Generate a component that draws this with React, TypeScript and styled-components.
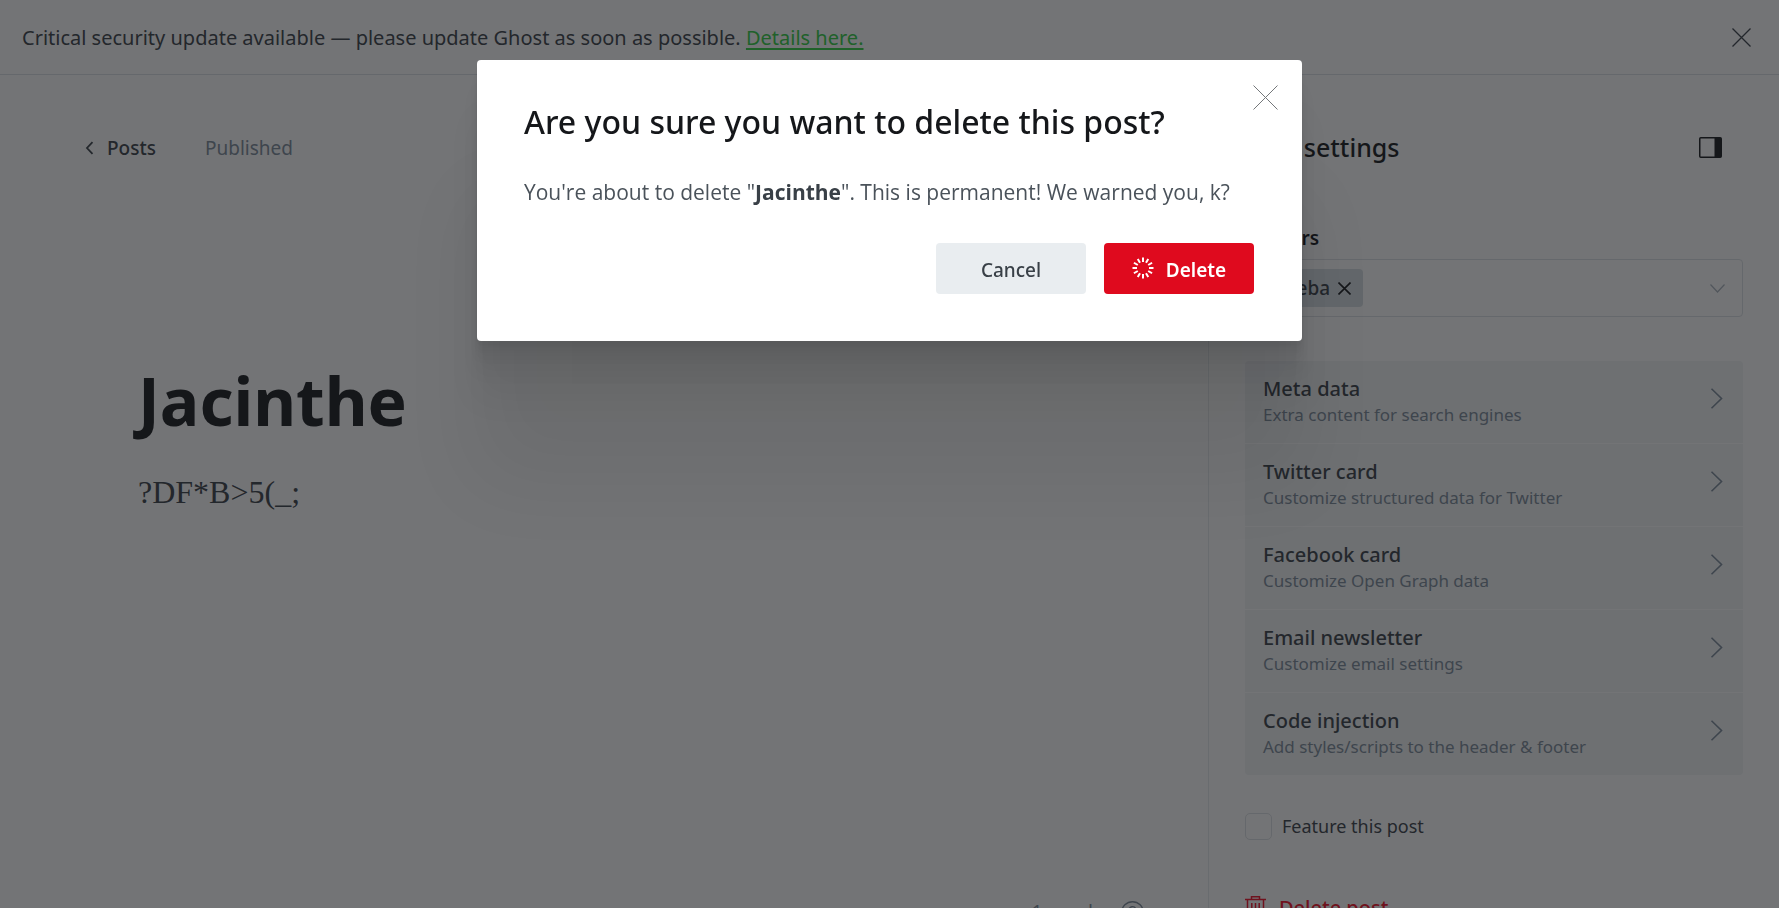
import React from 'react';
import styled, { createGlobalStyle } from 'styled-components';

const colors = {
  ink: '#15171a',
  text: '#394047',
  muted: '#7c8b9a',
  faint: '#abb4be',
  line: '#dde1e5',
  hairline: '#e6eaed',
  panel: '#f2f4f5',
  green: '#30cf43',
  red: '#f50b23',
};

const GlobalStyle = createGlobalStyle`
  * { box-sizing: border-box; }
  body {
    margin: 0;
    height: 100vh;
    overflow: hidden;
    background: #fff;
    color: ${colors.ink};
    font-family: 'Noto Sans', 'Open Sans', sans-serif;
    font-size: 20px;
    line-height: 28px;
  }
  button {
    margin: 0;
    padding: 0;
    border: 0;
    background: none;
    color: inherit;
    font: inherit;
    cursor: pointer;
  }
  svg { display: block; flex: none; fill: none; stroke: currentColor; }
`;

/* Top banner */
const Banner = styled.header`
  display: flex;
  align-items: center;
  justify-content: space-between;
  height: 75px;
  padding: 0 28px 0 22px;
  border-bottom: 1px solid ${colors.line};
  color: ${colors.text};
`;

const BannerText = styled.p`
  margin: 0;
  line-height: 26px;
  padding-top: 2px;
`;

const BannerLink = styled.a`
  color: ${colors.green};
  text-decoration: underline;
  text-underline-offset: 3px;
`;

const BannerClose = styled.button`
  color: ${colors.text};
`;

/* Editor and sidebar */
const Workspace = styled.div`
  display: flex;
  height: 100vh;
`;

const Editor = styled.main`
  flex: 1;
  min-width: 0;
  display: flex;
  flex-direction: column;
  padding: 59px 64px 57px 84px;
`;

const EditorNav = styled.nav`
  display: flex;
  align-items: center;
  gap: 49px;
  font-size: 19px;
`;

const BackLink = styled.a`
  display: flex;
  align-items: center;
  gap: 12px;
  color: ${colors.text};
  font-weight: 500;
  text-decoration: none;
`;

const Status = styled.span`
  color: ${colors.muted};
`;

const Post = styled.article`
  padding: 198px 54px 0;
`;

const PostTitle = styled.h1`
  margin: 0;
  font-size: 66px;
  line-height: 80px;
  font-weight: 700;
`;

const PostBody = styled.p`
  margin: 28px 0 0;
  color: ${colors.text};
  font-family: 'Liberation Serif', serif;
  font-size: 32px;
  line-height: 48px;
`;

const EditorFooter = styled.footer`
  display: flex;
  align-items: center;
  justify-content: flex-end;
  gap: 28px;
  margin-top: auto;
  color: ${colors.muted};
  font-size: 19px;
`;

const Sidebar = styled.aside`
  flex: none;
  width: 571px;
  padding: 56px 36px 0;
  border-left: 1px solid ${colors.hairline};
`;

const SidebarHeader = styled.div`
  display: flex;
  align-items: center;
  justify-content: space-between;
  height: 32px;
  padding-right: 21px;
`;

const SidebarTitle = styled.h2`
  margin: 0;
  font-size: 25px;
  line-height: 32px;
  font-weight: 500;
`;

const FieldLabel = styled.label`
  display: block;
  margin: 61px 0 7px;
  font-size: 19px;
  font-weight: 600;
`;

const TokenField = styled.div`
  display: flex;
  align-items: center;
  gap: 8px;
  height: 58px;
  padding: 0 17px 0 9px;
  border: 1px solid ${colors.line};
  border-radius: 4px;
  color: ${colors.faint};
`;

const Token = styled.span`
  display: flex;
  align-items: center;
  gap: 8px;
  height: 38px;
  padding: 0 12px 0 10px;
  border-radius: 4px;
  background: #d7dee3;
  color: ${colors.text};
  font-size: 19px;
  font-weight: 500;
`;

const TokenRemove = styled.button`
  color: ${colors.ink};
`;

const TokenInput = styled.input`
  flex: 1;
  min-width: 0;
  border: 0;
  outline: 0;
  background: transparent;
  font: inherit;
`;

const SettingsList = styled.ul`
  display: flex;
  flex-direction: column;
  gap: 1px;
  margin: 44px 0 37px;
  padding: 0;
  border-radius: 4px;
  overflow: hidden;
  list-style: none;
`;

const SettingsButton = styled.button`
  display: flex;
  align-items: center;
  justify-content: space-between;
  width: 100%;
  height: 82px;
  padding: 0 20px 8px 18px;
  background: ${colors.panel};
  color: ${colors.muted};
  text-align: left;
`;

const SettingsName = styled.span`
  display: block;
  padding-top: 8px;
  color: ${colors.text};
  font-weight: 500;
  line-height: 26px;
`;

const SettingsHint = styled.span`
  display: block;
  font-size: 17px;
  line-height: 26px;
`;

const CheckLabel = styled.label`
  display: flex;
  align-items: center;
  gap: 10px;
  color: ${colors.text};
  font-size: 18px;
`;

const Checkbox = styled.input`
  appearance: none;
  width: 27px;
  height: 27px;
  margin: 0;
  border: 1px solid ${colors.line};
  border-radius: 5px;
`;

const DeletePost = styled.button`
  display: flex;
  align-items: center;
  gap: 13px;
  margin-top: 54px;
  color: ${colors.red};
  font-weight: 500;
`;

/* Modal */
const Overlay = styled.div`
  position: fixed;
  inset: 0;
  display: flex;
  align-items: flex-start;
  justify-content: center;
  padding-top: 60px;
  background: rgba(21, 23, 26, 0.6);
`;

const Dialog = styled.section`
  position: relative;
  width: 825px;
  max-width: 94vw;
  padding: 40px 48px 47px 47px;
  border-radius: 4px;
  background: #fff;
  box-shadow:
    0 4px 2px rgba(0, 0, 0, 0.02),
    0 9px 5px rgba(0, 0, 0, 0.03),
    0 17px 10px rgba(0, 0, 0, 0.035),
    0 31px 18px rgba(0, 0, 0, 0.042),
    0 58px 33px rgba(0, 0, 0, 0.05),
    0 138px 80px rgba(0, 0, 0, 0.07);
`;

const DialogTitle = styled.h2`
  margin: 0;
  font-size: 32px;
  line-height: 44px;
  font-weight: 500;
`;

const DialogText = styled.p`
  margin: 34px 0 36px;
  color: #4a525a;
  font-family: 'Open Sans', sans-serif;
  font-size: 21px;
  line-height: 29px;

  strong { color: ${colors.text}; }
`;

const DialogActions = styled.div`
  display: flex;
  justify-content: flex-end;
  gap: 18px;
`;

const DialogButton = styled.button<{ $danger?: boolean }>`
  display: flex;
  align-items: center;
  justify-content: center;
  gap: 12px;
  width: 150px;
  height: 51px;
  padding-top: 2px;
  border-radius: 4px;
  background: ${(p) => (p.$danger ? '#df0a1e' : '#e9edf0')};
  color: ${(p) => (p.$danger ? '#fff' : colors.text)};
  font-size: 19px;
  font-weight: ${(p) => (p.$danger ? 600 : 500)};

  svg { margin-bottom: 4px; }
`;

const DialogClose = styled.button`
  position: absolute;
  top: 25px;
  right: 24px;
  color: #74777a;
`;

const Cross = ({ size, weight = 1 }: { size: number; weight?: number }) => (
  <svg width={size} height={size} viewBox={`0 0 ${size} ${size}`} strokeWidth={weight} aria-hidden="true">
    <path d={`M.5.5L${size - 0.5} ${size - 0.5}M${size - 0.5}.5L.5 ${size - 0.5}`} />
  </svg>
);

const Spinner = () => (
  <svg width="22" height="22" viewBox="-11 -11 22 22" strokeWidth="2" aria-hidden="true">
    {Array.from({ length: 12 }, (_, i) => (
      <path key={i} d="M0-6V-10.500" transform={`rotate(${i * 30})`} />
    ))}
  </svg>
);

const settings = [
  ['Meta data', 'Extra content for search engines'],
  ['Twitter card', 'Customize structured data for Twitter'],
  ['Facebook card', 'Customize Open Graph data'],
  ['Email newsletter', 'Customize email settings'],
  ['Code injection', 'Add styles/scripts to the header & footer'],
];

export default function App() {
  return (
    <>
      <GlobalStyle />
      <Banner>
        <BannerText>
          Critical security update available — please update Ghost as soon as possible.{' '}
          <BannerLink href="#details">Details here.</BannerLink>
        </BannerText>
        <BannerClose aria-label="Dismiss">
          <Cross size={19} weight={1.3} />
        </BannerClose>
      </Banner>

      <Workspace>
        <Editor>
          <EditorNav>
            <BackLink href="#posts">
              <svg width="11" height="14" viewBox="0 0 11 14" strokeWidth="1.8" aria-hidden="true">
                <path d="M8.500 1.200L3 7l5.500 5.800" />
              </svg>
              Posts
            </BackLink>
            <Status>Published</Status>
          </EditorNav>
          <Post>
            <PostTitle>Jacinthe</PostTitle>
            <PostBody>?DF*B&gt;5(_;</PostBody>
          </Post>
          <EditorFooter>
            <span>1 word</span>
            <svg width="23" height="23" viewBox="0 0 23 23" strokeWidth="1.400" role="img" aria-label="Help">
              <circle cx="11.500" cy="11.500" r="10.800" />
              <path d="M8 9.200a3.500 3.500 0 1 1 5.200 3c-1.200.700-1.700 1.300-1.700 2.500M11.500 16.500v1.500" />
            </svg>
          </EditorFooter>
        </Editor>

        <Sidebar>
          <SidebarHeader>
            <SidebarTitle>Post settings</SidebarTitle>
            <button aria-label="Toggle settings">
              <svg width="23" height="21" viewBox="0 0 23 21" strokeWidth="1.500" aria-hidden="true">
                <rect x=".75" y=".75" width="21.500" height="19.500" rx="1" />
                <path d="M15.500 1h6.500v19h-6.500z" fill="currentColor" stroke="none" />
              </svg>
            </button>
          </SidebarHeader>

          <FieldLabel htmlFor="authors">Authors</FieldLabel>
          <TokenField>
            <Token>
              Prueba
              <TokenRemove aria-label="Remove author">
                <Cross size={13} weight={1.6} />
              </TokenRemove>
            </Token>
            <TokenInput id="authors" />
            <svg width="15" height="9" viewBox="0 0 15 9" strokeWidth="1.200" aria-hidden="true">
              <path d="M.5.5l7 7.500 7-7.500" />
            </svg>
          </TokenField>

          <SettingsList>
            {settings.map(([name, hint]) => (
              <li key={name}>
                <SettingsButton>
                  <span>
                    <SettingsName>{name}</SettingsName>
                    <SettingsHint>{hint}</SettingsHint>
                  </span>
                  <svg width="13" height="21" viewBox="0 0 13 21" strokeWidth="1.600" aria-hidden="true">
                    <path d="M1.500.8l10 9.700-10 9.700" />
                  </svg>
                </SettingsButton>
              </li>
            ))}
          </SettingsList>

          <CheckLabel>
            <Checkbox type="checkbox" />
            Feature this post
          </CheckLabel>

          <DeletePost>
            <svg width="21" height="24" viewBox="0 0 21 24" strokeWidth="1.500" aria-hidden="true">
              <path d="M0 3.500h21M6.500 3.500V.8h8v2.700M2.500 3.500v19.500h16V3.500M6.800 7v12M10.500 7v12M14.200 7v12" />
            </svg>
            Delete post
          </DeletePost>
        </Sidebar>
      </Workspace>

      <Overlay>
        <Dialog role="dialog" aria-modal="true" aria-labelledby="dialog-title">
          <DialogTitle id="dialog-title">Are you sure you want to delete this post?</DialogTitle>
          <DialogClose aria-label="Close">
            <Cross size={25} />
          </DialogClose>
          <DialogText>
            You're about to delete "<strong>Jacinthe</strong>". This is permanent! We warned you, k?
          </DialogText>
          <DialogActions>
            <DialogButton>Cancel</DialogButton>
            <DialogButton $danger>
              <Spinner />
              Delete
            </DialogButton>
          </DialogActions>
        </Dialog>
      </Overlay>
    </>
  );
}
